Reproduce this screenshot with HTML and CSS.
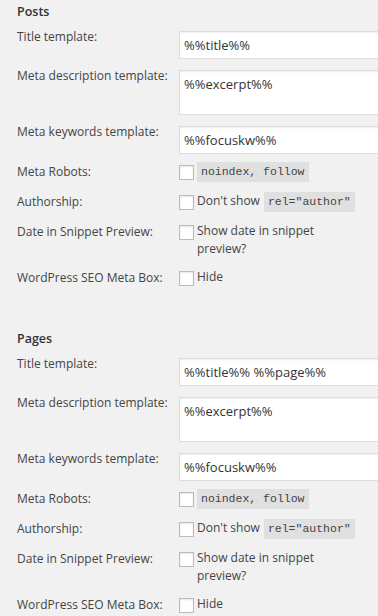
FILE: index.html
```html
<html>
<head>
    <title>Titles &amp; Metas</title>
    <link rel="stylesheet" href="styles.css">
</head>
<body>
    <div class="section">
        <h3>Posts</h3>
        <div class="row text-row">
            <label class="label">Title template:</label>
            <div class="field"><input type="text" value="%%title%%"></div>
        </div>
        <div class="row text-row">
            <label class="label">Meta description template:</label>
            <div class="field"><textarea>%%excerpt%%</textarea></div>
        </div>
        <div class="row text-row">
            <label class="label">Meta keywords template:</label>
            <div class="field"><input type="text" value="%%focuskw%%"></div>
        </div>
        <div class="row check-row first-check">
            <label class="label">Meta Robots:</label>
            <div class="field"><input type="checkbox"> <code>noindex, follow</code></div>
        </div>
        <div class="row check-row">
            <label class="label">Authorship:</label>
            <div class="field"><input type="checkbox"><span>Don't show</span> <code>rel="author"</code></div>
        </div>
        <div class="row check-row">
            <label class="label">Date in Snippet Preview:</label>
            <div class="field"><input type="checkbox"><span class="wrap">Show date in snippet preview?</span></div>
        </div>
        <div class="row check-row">
            <label class="label">WordPress SEO Meta Box:</label>
            <div class="field"><input type="checkbox"><span>Hide</span></div>
        </div>
    </div>

    <div class="section">
        <h3>Pages</h3>
        <div class="row text-row">
            <label class="label">Title template:</label>
            <div class="field"><input type="text" value="%%title%% %%page%%"></div>
        </div>
        <div class="row text-row">
            <label class="label">Meta description template:</label>
            <div class="field"><textarea>%%excerpt%%</textarea></div>
        </div>
        <div class="row text-row">
            <label class="label">Meta keywords template:</label>
            <div class="field"><input type="text" value="%%focuskw%%"></div>
        </div>
        <div class="row check-row first-check">
            <label class="label">Meta Robots:</label>
            <div class="field"><input type="checkbox"> <code>noindex, follow</code></div>
        </div>
        <div class="row check-row">
            <label class="label">Authorship:</label>
            <div class="field"><input type="checkbox"><span>Don't show</span> <code>rel="author"</code></div>
        </div>
        <div class="row check-row">
            <label class="label">Date in Snippet Preview:</label>
            <div class="field"><input type="checkbox"><span class="wrap">Show date in snippet preview?</span></div>
        </div>
        <div class="row check-row">
            <label class="label">WordPress SEO Meta Box:</label>
            <div class="field"><input type="checkbox"><span>Hide</span></div>
        </div>
    </div>
</body>
</html>
```

FILE: styles.css
```css
html, body {
    overflow: hidden;
}
body {
    margin: 0;
    padding: 3px 0 0 17px;
    background: #f1f1f1;
    color: #444;
    font-family: "Open Sans", sans-serif;
    font-size: 12px;
    line-height: 18px;
}
.section {
    margin-bottom: 42px;
}
.section:last-child {
    margin-bottom: 0;
}
h3 {
    margin: 0 0 7px;
    font-size: 12.5px;
    font-weight: 600;
    line-height: 18px;
    color: #333;
}
.row {
    display: flex;
    align-items: flex-start;
}
.label {
    width: 162px;
    flex: none;
}
.field {
    flex: 1;
    min-width: 0;
    overflow: hidden;
    display: flex;
    align-items: flex-start;
}
.text-row {
    margin-bottom: 8px;
}
.text-row .field {
    padding-top: 3px;
}
input[type="text"], textarea {
    box-sizing: border-box;
    width: 240px;
    flex: none;
    margin: 0;
    padding: 3px 4px;
    border: 1px solid #ddd;
    box-shadow: inset 0 1px 2px rgba(0, 0, 0, 0.07);
    background: #fff;
    color: #333;
    font-family: "Open Sans", sans-serif;
    font-size: 13px;
    line-height: 20px;
    outline: none;
}
input[type="text"] {
    height: 28px;
}
textarea {
    height: 45px;
    resize: none;
    overflow: hidden;
}
.check-row {
    margin-top: 10px;
    line-height: 20px;
}
.first-check {
    margin-top: 0;
}
input[type="checkbox"] {
    -webkit-appearance: none;
    appearance: none;
    box-sizing: border-box;
    width: 15px;
    height: 15px;
    margin: 3px 3px 0 0;
    border: 1px solid #bbb;
    background: #fff;
    box-shadow: inset 0 1px 2px rgba(0, 0, 0, 0.1);
    flex: none;
}
.field span {
    line-height: 18px;
}
.field .wrap {
    width: 125px;
}
code {
    display: inline-block;
    margin-left: 0;
    padding: 0 4px;
    background: #e0e0e0;
    color: #444;
    font-family: "Liberation Mono", monospace;
    font-size: 11.5px;
    line-height: 20px;
}
.field span + code {
    margin-left: 4px;
}
```
